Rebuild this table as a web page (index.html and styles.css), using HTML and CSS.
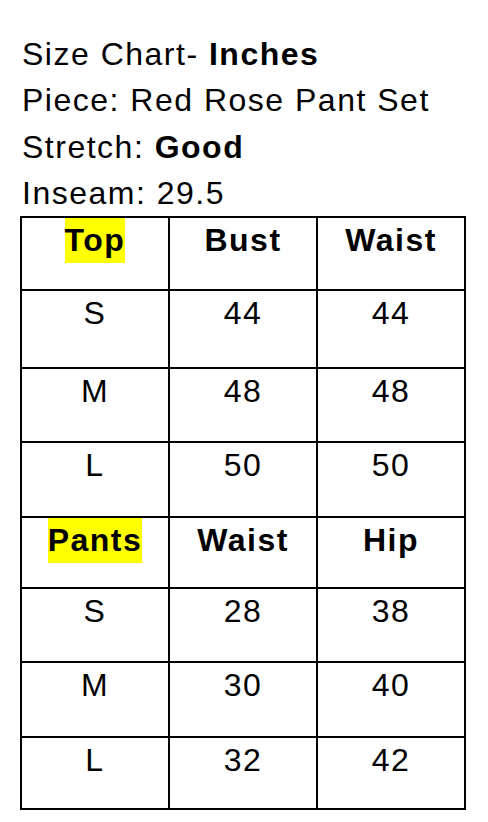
FILE: index.html
```html
<!DOCTYPE html>
<html lang="en">
<head>
<meta charset="utf-8">
<title>Size Chart</title>
<link rel="stylesheet" href="styles.css">
</head>
<body>
<div class="page">
  <div class="info">
    <p class="line">Size Chart- <b>Inches</b></p>
    <p class="line">Piece: Red Rose Pant Set</p>
    <p class="line">Stretch: <b>Good</b></p>
    <p class="line">Inseam: 29.5</p>
  </div>
  <table class="chart">
    <tbody>
      <tr class="r73 head"><td><span class="hl">Top</span></td><td>Bust</td><td>Waist</td></tr>
      <tr class="r78"><td>S</td><td>44</td><td>44</td></tr>
      <tr class="r74"><td>M</td><td>48</td><td>48</td></tr>
      <tr class="r75"><td>L</td><td>50</td><td>50</td></tr>
      <tr class="r71 head"><td><span class="hl">Pants</span></td><td>Waist</td><td>Hip</td></tr>
      <tr class="r74"><td>S</td><td>28</td><td>38</td></tr>
      <tr class="r75"><td>M</td><td>30</td><td>40</td></tr>
      <tr class="r72"><td>L</td><td>32</td><td>42</td></tr>
    </tbody>
  </table>
</div>
</body>
</html>
```
FILE: styles.css
```css
html, body {
  margin: 0;
  padding: 0;
  background: #fff;
}
body {
  font-family: "Liberation Sans", Arial, sans-serif;
  color: #000;
}
.page {
  padding: 31px 0 0 20px;
}
.info {
  padding-left: 2px;
}
.line {
  margin: 0;
  font-size: 32px;
  line-height: 46.25px;
  letter-spacing: 1.5px;
  white-space: nowrap;
}
.line b {
  font-weight: 700;
}
.chart {
  border-collapse: collapse;
  table-layout: fixed;
  width: 446px;
  font-size: 32px;
  line-height: 45px;
  letter-spacing: 1.5px;
}
.chart td {
  border: 2px solid #000;
  padding: 0;
  text-align: center;
  vertical-align: top;
  width: 33.333%;
}
.head td {
  font-weight: 700;
}
.hl {
  display: inline-block;
  background: #ffff00;
  line-height: 45px;
}
.r71 { height: 71px; }
.r72 { height: 72px; }
.r73 { height: 73px; }
.r74 { height: 74px; }
.r75 { height: 75px; }
.r78 { height: 78px; }
```
